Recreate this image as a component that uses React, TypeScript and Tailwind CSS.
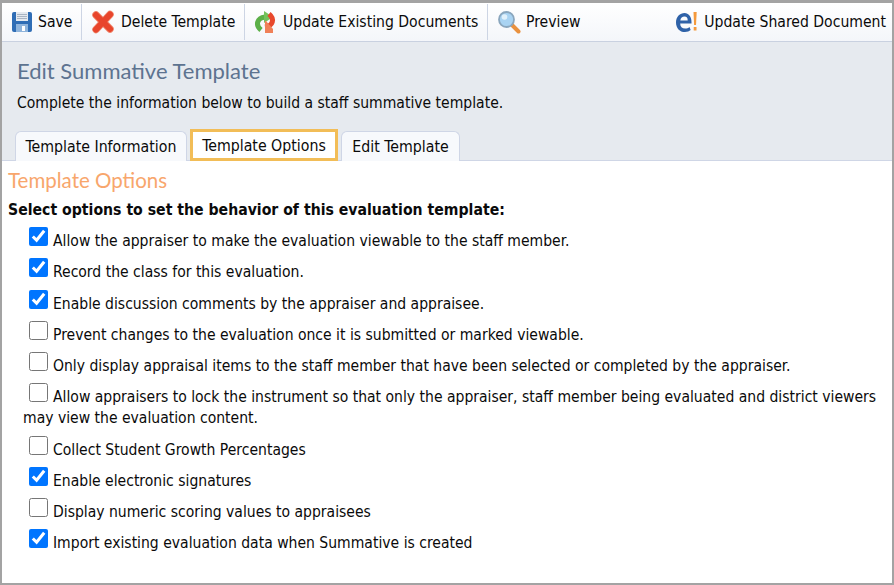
import React from 'react';

const SaveIcon = () => (
  <svg width="22" height="22" viewBox="0 0 22 22">
    <path d="M1 3a2 2 0 0 1 2-2h16a2 2 0 0 1 2 2v16a2 2 0 0 1-2 2H3a2 2 0 0 1-2-2z" fill="#2f6db5" />
    <rect x="5" y="1" width="12" height="9" fill="#e4e9ef" />
    <path d="M6 3.500h10M6 5.500h10M6 7.500h10" stroke="#a9b4c2" strokeWidth="1" />
    <rect x="5" y="13" width="12" height="8" fill="#8fb4dc" />
    <rect x="11" y="15" width="3" height="5" fill="#fff" />
  </svg>
);

const DeleteIcon = () => (
  <svg width="24" height="24" viewBox="0 0 24 24">
    <path d="M5 5 19 19M19 4.500 5 19.500" stroke="#f08a70" strokeWidth="7.500" strokeLinecap="round" />
    <path d="M5 5 19 19M19 4.500 5 19.500" stroke="#e8452c" strokeWidth="6" strokeLinecap="round" />
  </svg>
);

const UpdateIcon = () => (
  <svg width="24" height="24" viewBox="0 0 24 24">
    <path d="M8 20C2 15 4 8 12 7" fill="none" stroke="#5cb048" strokeWidth="5" />
    <path d="M11 1l9 6-9 6z" fill="#74c25c" />
    <path d="M16 4c6 5 4 12-4 13" fill="none" stroke="#e8482c" strokeWidth="5" />
    <path d="M13 11l-1 0 0 12 8 0 0-4z" fill="#f08058" />
  </svg>
);

const PreviewIcon = () => (
  <svg width="24" height="24" viewBox="0 0 24 24">
    <path d="M15 15l6.500 6.500" stroke="#e9913f" strokeWidth="4" strokeLinecap="round" />
    <circle cx="9.500" cy="9.500" r="7.500" fill="#a9d3f2" stroke="#8aa6bd" strokeWidth="1.800" />
    <circle cx="7.500" cy="7" r="2.800" fill="#e1f1fb" />
  </svg>
);

const SharedIcon = () => (
  <svg width="24" height="24" viewBox="0 0 24 24">
    <path
      d="M15.500 17c-1.200 1-2.600 1.600-4.400 1.600-3 0-4.900-1.800-4.900-5.200h11.300v-1.400C17.500 6.600 14.500 3 10.600 3 6 3 2 6.800 2 12.400 2 18 5.700 22 11 22c2.400 0 4.300-.7 5.700-1.900zM6.300 10.400c.3-2.300 2-3.800 4.200-3.800s3.300 1.600 3.200 3.800z"
      fill="#2f62a8"
    />
    <path d="M19.500 2h3.200l-.7 13h-1.900z" fill="#f59a3c" />
    <rect x="19.700" y="17" width="2.800" height="3.500" fill="#f59a3c" />
  </svg>
);

const Separator = () => <div className="w-px h-[36px] bg-[#cdd5e4]" />;

const options = [
  { label: 'Allow the appraiser to make the evaluation viewable to the staff member.', checked: true },
  { label: 'Record the class for this evaluation.', checked: true },
  { label: 'Enable discussion comments by the appraiser and appraisee.', checked: true },
  { label: 'Prevent changes to the evaluation once it is submitted or marked viewable.', checked: false },
  { label: 'Only display appraisal items to the staff member that have been selected or completed by the appraiser.', checked: false },
  {
    label:
      'Allow appraisers to lock the instrument so that only the appraiser, staff member being evaluated and district viewers may view the evaluation content.',
    checked: false,
  },
  { label: 'Collect Student Growth Percentages', checked: false },
  { label: 'Enable electronic signatures', checked: true },
  { label: 'Display numeric scoring values to appraisees', checked: false },
  { label: 'Import existing evaluation data when Summative is created', checked: true },
];

export default function App() {
  return (
    <div className="w-[894px] h-[585px] bg-white border-2 border-t-[3px] border-[#a3a3a3] flex flex-col overflow-hidden font-['DejaVu_Sans','Noto_Sans',sans-serif] [font-stretch:condensed] text-[#0a0a0a] text-[15.560px]">
      {/* Toolbar */}
      <div className="h-[39px] shrink-0 flex items-center bg-gradient-to-b from-white to-[#f4f6fa] border-b border-[#c9d1e0] text-[15.600px]">
        <div className="flex items-center gap-[5px] pl-[9px] w-[79px]">
          <SaveIcon />
          <span className="pt-[2px]">Save</span>
        </div>
        <Separator />
        <div className="flex items-center gap-[6px] pl-[9px] w-[162px]">
          <DeleteIcon />
          <span className="pt-[2px]">Delete Template</span>
        </div>
        <Separator />
        <div className="flex items-center gap-[6px] pl-[8px] w-[242px]">
          <UpdateIcon />
          <span className="pt-[2px]">Update Existing Documents</span>
        </div>
        <Separator />
        <div className="flex items-center gap-[5px] pl-[9px]">
          <PreviewIcon />
          <span className="pt-[2px]">Preview</span>
        </div>
        <div className="flex items-center gap-[6px] ml-auto pr-[6px]">
          <SharedIcon />
          <span className="pt-[2px]">Update Shared Document</span>
        </div>
      </div>

      {/* Page header */}
      <div className="h-[119px] shrink-0 bg-[#e6eaef] border-b border-[#cfd6e6] flex flex-col">
        <h1 className="pl-[15px] pt-[15px] text-[22px] leading-[28px] text-[#5d7390] font-['Lato',sans-serif] [font-stretch:normal]">
          Edit Summative Template
        </h1>
        <p className="pl-[15px] pt-[8px] leading-[21px]">Complete the information below to build a staff summative template.</p>
        <div className="flex items-end pl-[13px] gap-[3px] mt-auto -mb-px text-[15.750px]">
          <div className="w-[172px] h-[30px] pt-px flex items-center justify-center bg-[#f7f9fc] border border-b-0 border-[#cfd6e6] rounded-t-[6px]">
            Template Information
          </div>
          <div className="w-[148px] h-[32px] pt-[2px] flex items-center justify-center bg-white border-[3px] border-[#f2bd57]">Template Options</div>
          <div className="w-[119px] h-[30px] pt-px flex items-center justify-center bg-[#f7f9fc] border border-b-0 border-[#cfd6e6] rounded-t-[6px]">
            Edit Template
          </div>
        </div>
      </div>

      {/* Options */}
      <div className="flex-1 pl-[6px] pr-[10px]">
        <h2 className="pt-[5px] text-[20.500px] leading-[28px] text-[#f8a66c] font-['Lato',sans-serif] [font-stretch:normal]">Template Options</h2>
        <p className="pt-[5px] leading-[22px] font-bold text-[15.660px]">Select options to set the behavior of this evaluation template:</p>
        <ul className="pl-[15px] pt-[6px]">
          {options.map(option => (
            <li key={option.label} className="leading-[21px] mb-[6.250px]">
              <input
                type="checkbox"
                defaultChecked={option.checked}
                className="w-[19px] h-[19px] ml-[6px] mr-[5px] accent-[#0075ff]"
              />
              {option.label}
            </li>
          ))}
        </ul>
      </div>
    </div>
  );
}
